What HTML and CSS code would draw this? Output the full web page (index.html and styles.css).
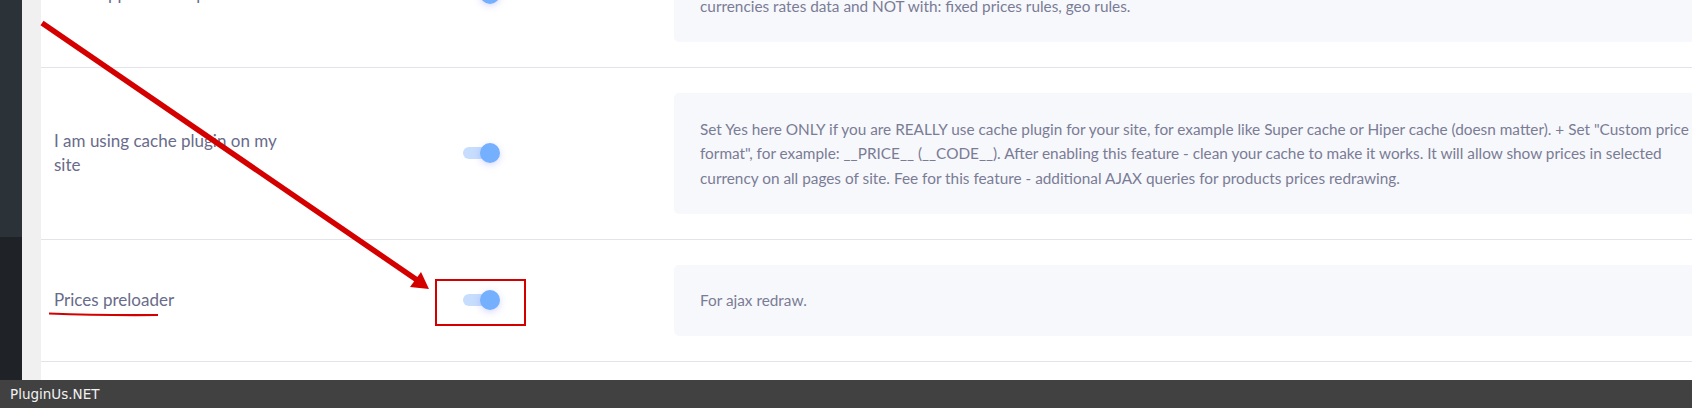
FILE: index.html
```html
<!DOCTYPE html>
<html lang="en">
<head>
  <meta charset="UTF-8">
  <title>Currency options</title>
  <link rel="stylesheet" href="styles.css">
</head>
<body>
  <div class="screen">
    <div class="admin-menu"></div>
    <div class="admin-gutter"></div>

    <div class="panel">
      <div class="options">
        <div class="option">
          <div class="option-label">Show approximate price</div>
          <div class="option-switch"><span class="switch"></span></div>
          <div class="option-desc">Show approximate price on the shop and the single product page with currency of user defined by IP in the GeoIp rules tab. Works only with currencies rates data and NOT with: fixed prices rules, geo rules.</div>
        </div>

        <div class="option">
          <div class="option-label">I am using cache plugin on my site</div>
          <div class="option-switch"><span class="switch"></span></div>
          <div class="option-desc">Set Yes here ONLY if you are REALLY use cache plugin for your site, for example like Super cache or Hiper cache (doesn matter). + Set "Custom price format", for example: __PRICE__ (__CODE__). After enabling this feature - clean your cache to make it works. It will allow show prices in selected currency on all pages of site. Fee for this feature - additional AJAX queries for products prices redrawing.</div>
        </div>

        <div class="option">
          <div class="option-label">Prices preloader</div>
          <div class="option-switch"><span class="switch"></span></div>
          <div class="option-desc">For ajax redraw.</div>
        </div>
      </div>
    </div>

    <!-- red markup drawn over the screenshot -->
    <svg class="marks" width="1692" height="380" viewBox="0 0 1692 380">
      <line x1="42" y1="23" x2="417" y2="280" stroke="#d40000" stroke-width="5.5"/>
      <polygon points="429,289 410,287 421,272" fill="#d40000"/>
      <rect x="436" y="280" width="89" height="45" fill="none" stroke="#d40000" stroke-width="2"/>
      <path d="M49 313.5 Q100 315.5 158 315" fill="none" stroke="#d40000" stroke-width="2.2"/>
    </svg>
  </div>

  <div class="footer">PluginUs.NET</div>
</body>
</html>
```

FILE: styles.css
```css
body {
  margin: 0;
  font-family: Lato, "Open Sans", sans-serif;
  background: #fff;
  overflow: hidden;
}

.screen {
  position: relative;
  display: flex;
  height: 380px;
  overflow: hidden;
}

.admin-menu {
  width: 22px;
  flex-shrink: 0;
  background: linear-gradient(#2c3338 0, #2c3338 237px, #1f2327 237px);
}

.admin-gutter {
  width: 19px;
  flex-shrink: 0;
  background: #f0f0f1;
}

.panel {
  flex: 1;
  min-width: 0;
  overflow: hidden;
  background: #fff;
}

.options {
  margin-top: -79px;
}

.option {
  display: grid;
  grid-template-columns: 409px 211px 1060px;
  align-items: center;
  padding: 25px 0 25px 13px;
  border-bottom: 1px solid #e3e4ea;
}

.option-label {
  max-width: 250px;
  font-size: 17px;
  line-height: 24px;
  color: #696b8a;
}

.switch {
  position: relative;
  display: block;
  width: 37px;
  height: 20px;
}

.switch::before {
  content: "";
  position: absolute;
  left: 0;
  top: 4px;
  width: 34px;
  height: 12px;
  border-radius: 6px;
  background: #c7ddfd;
}

.switch::after {
  content: "";
  position: absolute;
  right: 0;
  top: 0;
  width: 20px;
  height: 20px;
  border-radius: 50%;
  background: #74b0fd;
  box-shadow: 0 2px 7px rgba(105, 110, 255, 0.28);
}

.option-desc {
  padding: 23.5px 26px;
  border-radius: 5px;
  background: #f7f8fc;
  font-size: 15.35px;
  line-height: 24.5px;
  color: #7a7c95;
}

.marks {
  position: absolute;
  left: 0;
  top: 0;
  pointer-events: none;
}

.footer {
  height: 28px;
  padding-left: 10px;
  background: #414141;
  color: #f2f2f2;
  font-family: "DejaVu Sans", sans-serif;
  font-size: 13.5px;
  line-height: 28px;
}
```
